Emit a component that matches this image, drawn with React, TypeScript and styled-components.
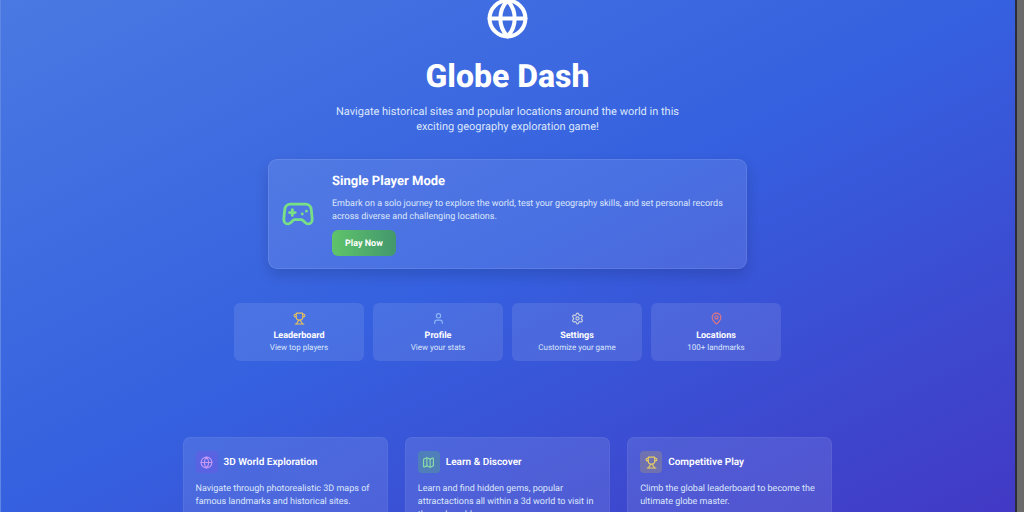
import React from 'react';
import styled, { createGlobalStyle } from 'styled-components';
import { Gamepad2, Globe, Map, MapPin, Settings, Trophy, User } from 'lucide-react';

const GlobalStyle = createGlobalStyle`
  * { box-sizing: border-box; }
  body {
    margin: 0;
    font-family: Roboto, "Liberation Sans", sans-serif;
    color: #fff;
    -webkit-font-smoothing: antialiased;
    text-rendering: geometricPrecision;
  }
  h1, h2, h3, p { margin: 0; }
  a { color: inherit; text-decoration: none; }
  svg { display: block; flex-shrink: 0; }
`;

const Window = styled.div`
  display: flex;
  height: 100vh;
  overflow: hidden;
`;

const Page = styled.main`
  flex: 1;
  display: flex;
  flex-direction: column;
  align-items: center;
  overflow: hidden;
  box-shadow: inset 1px 0 #5f88e4;
  background: linear-gradient(to bottom right, #4a79e2, #3560df 50%, #4239c5);
`;

const ScrollTrack = styled.div`
  width: 9px;
  background: #6b6b6b;
  border-left: 2px solid #2c2d3a;
`;

const Hero = styled.header`
  display: flex;
  flex-direction: column;
  align-items: center;
  margin-top: -3px;
  text-align: center;
`;

const Title = styled.h1`
  margin-top: 16px;
  font-size: 32px;
  line-height: 40px;
  font-weight: 800;
`;

const BodyText = styled.p`
  font-size: 9px;
  line-height: 13px;
  color: #dbe6fb;
`;

const Lead = styled(BodyText)`
  max-width: 350px;
  margin-top: 8px;
  font-size: 11px;
  line-height: 15px;
`;

const ModeCard = styled.section`
  display: flex;
  align-items: center;
  gap: 17px;
  width: 479px;
  max-width: 100%;
  margin-top: 25px;
  padding: 12px;
  border: 1px solid rgba(255, 255, 255, 0.1);
  border-radius: 9px;
  background: rgba(255, 255, 255, 0.1);
  box-shadow: 0 6px 14px rgba(0, 0, 0, 0.14);
`;

const ModeTitle = styled.h2`
  font-size: 13px;
  line-height: 20px;
  font-weight: 700;
`;

const ModeText = styled(BodyText)`
  margin-top: 6px;
`;

const PlayButton = styled.button`
  height: 26px;
  margin-top: 6px;
  padding: 2px 13px 0;
  border: 0;
  border-radius: 6px;
  background: linear-gradient(to right, #5fc46b, #43976d);
  color: #fff;
  font: 700 9px/13px Roboto, "Liberation Sans", sans-serif;
  text-rendering: inherit;
`;

const Links = styled.nav`
  display: grid;
  grid-template-columns: repeat(4, 1fr);
  gap: 9px;
  width: 547px;
  max-width: 100%;
  margin-top: 34px;
`;

const LinkCard = styled.a`
  display: flex;
  flex-direction: column;
  align-items: center;
  height: 58px;
  padding-top: 9px;
  border-radius: 6px;
  background: rgba(255, 255, 255, 0.1);
`;

const LinkTitle = styled.span`
  margin-top: 5px;
  font-size: 9px;
  line-height: 12px;
  font-weight: 700;
`;

const LinkText = styled.span`
  font-size: 8px;
  line-height: 11px;
  color: #dbe6fb;
`;

const Features = styled.section`
  display: grid;
  grid-template-columns: repeat(3, 1fr);
  gap: 17px;
  width: 650px;
  max-width: 100%;
  margin-top: 76px;
`;

const FeatureCard = styled.article`
  min-height: 112px;
  padding: 13px 12px;
  border: 1px solid rgba(255, 255, 255, 0.05);
  border-radius: 7px;
  background: rgba(255, 255, 255, 0.1);
`;

const FeatureHead = styled.div`
  display: flex;
  align-items: center;
  gap: 6px;
`;

const IconTile = styled.span<{ $tint: string }>`
  display: grid;
  place-items: center;
  width: 22px;
  height: 22px;
  border-radius: 4px;
  background: ${(p) => p.$tint};
`;

const FeatureTitle = styled.h3`
  font-size: 10px;
  line-height: 15px;
  font-weight: 600;
`;

const FeatureText = styled(BodyText)`
  margin-top: 10px;
`;

const links = [
  { title: 'Leaderboard', text: 'View top players', Icon: Trophy, color: '#e8c25a' },
  { title: 'Profile', text: 'View your stats', Icon: User, color: '#8cb8f5' },
  { title: 'Settings', text: 'Customize your game', Icon: Settings, color: '#d0d5dd' },
  { title: 'Locations', text: '100+ landmarks', Icon: MapPin, color: '#e8787e' },
];

const features = [
  { title: '3D World Exploration', text: 'Navigate through photorealistic 3D maps of famous landmarks and historical sites.', Icon: Globe, color: '#c79bf5', tint: 'rgba(125, 80, 235, 0.3)' },
  { title: 'Learn & Discover', text: 'Learn and find hidden gems, popular attractactions all within a 3d world to visit in the real world.', Icon: Map, color: '#8fe3a5', tint: 'rgba(85, 190, 110, 0.3)' },
  { title: 'Competitive Play', text: 'Climb the global leaderboard to become the ultimate globe master.', Icon: Trophy, color: '#ecd060', tint: 'rgba(200, 170, 80, 0.27)' },
];

export default function App() {
  return (
    <Window>
      <GlobalStyle />
      <Page>
        <Hero>
          <Globe size={43} strokeWidth={2.25} />
          <Title>Globe Dash</Title>
          <Lead>Navigate historical sites and popular locations around the world in this exciting geography exploration game!</Lead>
        </Hero>
        <ModeCard>
          <Gamepad2 size={34} color="#79df87" />
          <div>
            <ModeTitle>Single Player Mode</ModeTitle>
            <ModeText>Embark on a solo journey to explore the world, test your geography skills, and set personal records across diverse and challenging locations.</ModeText>
            <PlayButton type="button">Play Now</PlayButton>
          </div>
        </ModeCard>
        <Links>
          {links.map(({ title, text, Icon, color }) => (
            <LinkCard href="#" key={title}>
              <Icon size={13} color={color} />
              <LinkTitle>{title}</LinkTitle>
              <LinkText>{text}</LinkText>
            </LinkCard>
          ))}
        </Links>
        <Features>
          {features.map(({ title, text, Icon, color, tint }) => (
            <FeatureCard key={title}>
              <FeatureHead>
                <IconTile $tint={tint}>
                  <Icon size={13} color={color} />
                </IconTile>
                <FeatureTitle>{title}</FeatureTitle>
              </FeatureHead>
              <FeatureText>{text}</FeatureText>
            </FeatureCard>
          ))}
        </Features>
      </Page>
      <ScrollTrack />
    </Window>
  );
}
